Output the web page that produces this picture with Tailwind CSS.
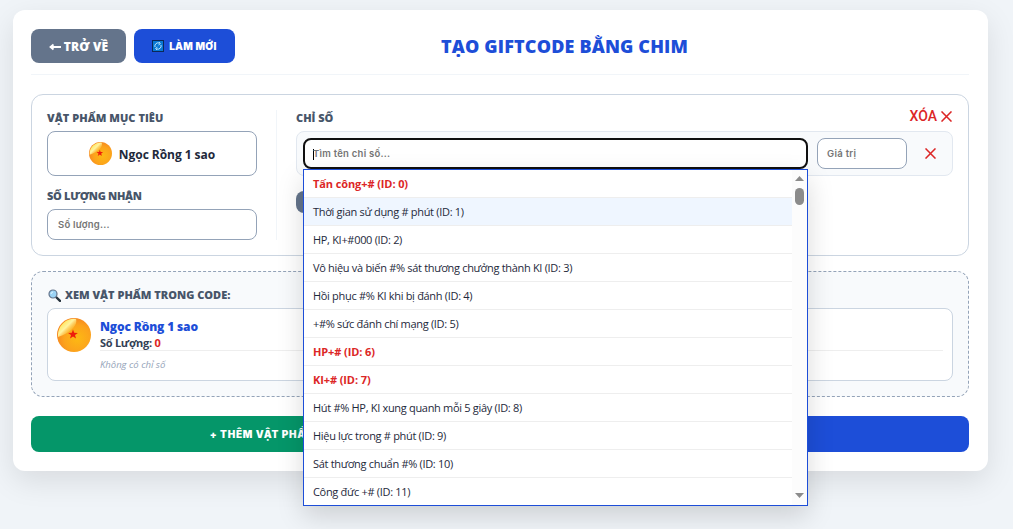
<!DOCTYPE html>
<html lang="vi">
  <head>
    <meta charset="UTF-8" />
    <meta name="viewport" content="width=device-width, initial-scale=1.0" />
    <title>Tạo Giftcode</title>
    <script src="https://cdn.jsdelivr.net/npm/@tailwindcss/browser@4"></script>
  </head>
  <body class="h-screen overflow-hidden bg-[#f0f4f8] pl-[13px] pt-[10px] font-['Open_Sans','Noto_Sans',sans-serif] text-[#1e293b]">
    <svg class="absolute size-0">
      <defs>
        <radialGradient id="ball" cx="0.6" cy="0.6" r="0.65">
          <stop offset="0" stop-color="#fdb913" />
          <stop offset="0.6" stop-color="#fca31c" />
          <stop offset="1" stop-color="#f58220" />
        </radialGradient>
        <linearGradient id="shine" x1="0.1" y1="0.1" x2="0.8" y2="0.8">
          <stop offset="0" stop-color="#ffe23a" />
          <stop offset="0.5" stop-color="#fff3a0" />
          <stop offset="1" stop-color="#fdc02c" stop-opacity="0" />
        </linearGradient>
        <symbol id="dragon-ball" viewBox="0 0 34 34">
          <circle cx="17" cy="17" r="17" fill="url(#ball)" />
          <path d="M1 17A16 16 0 0 1 19 1C21 7 14 15 1 19Z" fill="url(#shine)" />
          <path d="M16 11.5l1.2 3.3 3.7.1-2.9 2.2 1 3.5-3-2-3 2 1-3.5-2.9-2.2 3.7-.1z" fill="#ee1c0c" />
        </symbol>
        <symbol id="cross" viewBox="0 0 12 12">
          <path d="M.5 .5L11.5 11.5M11.5 .5L.5 11.5" fill="none" stroke="#dc2626" stroke-width="1.7" />
        </symbol>
      </defs>
    </svg>

    <main class="h-[461px] w-[975px] rounded-xl bg-white pr-[19px] pl-[18px] pt-[19px] shadow-[0_10px_30px_rgba(0,0,0,0.1)]">
      <header class="flex h-[46px] items-start border-b border-[#f1f5f9]">
        <button class="flex h-[34px] w-[95px] items-center justify-center gap-[3px] rounded-lg bg-[#64748b] pt-px text-[12px] font-extrabold text-white">
          <svg class="h-[8px] w-[12px]" viewBox="0 0 12 8" fill="none" stroke="white" stroke-width="1.8"><path d="M12 4H2M4.5 1.5L1.5 4L4.5 6.5" /></svg>
          <span class="tracking-[0.2px]">TRỞ VỀ</span>
        </button>
        <button class="ml-2 flex h-[34px] w-[101px] items-center justify-center gap-[5px] rounded-lg bg-[#1d4ed8] font-['Inter'] text-[10px] font-black text-white">
          <svg class="size-[12px]" viewBox="0 0 12 12" fill="none">
            <rect x=".5" y=".5" width="11" height="11" fill="#0878d4" stroke="#0b2858" />
            <path d="M3 7A3.2 3.2 0 0 1 7.5 3.2M9 5A3.2 3.2 0 0 1 4.5 8.8M7 2l1.3 1.6L6.5 5M5 10L3.6 8.4 5.4 7.2" stroke="#bfe6ff" />
          </svg>
          <span class="tracking-[0.3px]">LÀM MỚI</span>
        </button>
        <h1 class="ml-[206px] mt-[4px] whitespace-nowrap text-[18px] leading-[26px] font-extrabold tracking-[0.15px] text-[#1d4ed8]">TẠO GIFTCODE BẰNG CHIM</h1>
      </header>

      <!-- Vật phẩm + chỉ số -->
      <section class="mt-[19px] flex h-[162px] rounded-xl border border-[#cbd5e1] p-[15px]">
        <div class="w-[230px] border-r border-[#f1f5f9] pr-[19px]">
          <h2 class="h-[21px] text-[11px] leading-[16px] font-extrabold tracking-[0.05px] text-[#475569]">VẬT PHẨM MỤC TIÊU</h2>
          <div class="flex h-[45px] items-center justify-center gap-[7px] rounded-lg border border-[#94a3b8]">
            <svg class="size-[23px]"><use href="#dragon-ball" /></svg>
            <span class="pt-[3px] text-[12px] font-bold tracking-[-0.05px]">Ngọc Rồng 1 sao</span>
          </div>
          <h2 class="mt-[12px] h-[21px] text-[11px] leading-[16px] font-extrabold tracking-[-0.3px] text-[#475569]">SỐ LƯỢNG NHẬN</h2>
          <div class="flex h-[31px] items-center rounded-lg border border-[#94a3b8] px-[10px] pt-[2px] font-['Inter'] text-[9.5px] font-semibold tracking-[0.25px] text-[#757575]">Số lượng...</div>
        </div>

        <div class="ml-[19px] grow">
          <div class="flex h-[21px] justify-between">
            <h2 class="text-[11px] leading-[16px] font-extrabold text-[#475569]">CHỈ SỐ</h2>
            <button class="flex h-[13px] items-center gap-[4px] font-['Roboto'] text-[14px] font-medium text-[#dc2626]">
              XÓA <svg class="mr-px size-[11px]"><use href="#cross" /></svg>
            </button>
          </div>
          <div class="flex h-[45px] rounded-lg border border-[#e2e8f0] bg-[#f8fafc] p-[6px]">
            <div class="relative h-[31px] w-[505px]">
              <div class="flex h-full items-center rounded-lg border-2 border-[#101010] bg-white px-[8px] pt-[2px] font-['Inter'] text-[9.5px] font-semibold tracking-[0.25px] text-[#757575]">
                <span class="-mr-px h-[11px] w-px bg-black"></span>Tìm tên chỉ số...
              </div>
              <div class="absolute top-[31px] left-0 z-10 flex h-[337px] w-[505px] overflow-hidden border border-[#1d4ed8] bg-white shadow-[0_10px_25px_rgba(0,0,0,0.15)]">
                <div id="options" class="grow text-[11px] text-[#1e293b]"></div>
                <div class="flex w-[15px] flex-col items-center justify-between bg-[#fcfcfc] pt-[6px] pb-[7px]">
                  <div class="flex flex-col items-center gap-[7px]">
                    <svg class="h-[5px] w-[9px]" viewBox="0 0 9 5"><path d="M4.5 0L9 5H0z" fill="#8b8b8b" /></svg>
                    <span class="h-[17px] w-[9px] rounded-full bg-[#8b8b8b]"></span>
                  </div>
                  <svg class="h-[5px] w-[9px]" viewBox="0 0 9 5"><path d="M4.5 5L9 0H0z" fill="#8b8b8b" /></svg>
                </div>
              </div>
            </div>
            <div class="ml-[9px] flex h-[31px] w-[90px] items-center rounded-lg border border-[#94a3b8] bg-white px-[9px] pt-[2px] font-['Inter'] text-[9.5px] font-semibold tracking-[0.3px] text-[#757575]">Giá trị</div>
            <svg class="mt-[10px] ml-[18px] size-[11px]"><use href="#cross" /></svg>
          </div>
          <button class="mt-[15px] block h-[22px] w-[120px] rounded-lg bg-[#64748b]"></button>
        </div>
      </section>

      <!-- Xem trước -->
      <section class="mt-[15px] h-[126px] rounded-xl border border-dashed border-[#94a3b8] bg-[#f8fafc] px-[15px] pt-[15px]">
        <h2 class="flex h-[21px] items-start gap-[4px] text-[11px] leading-[16px] font-extrabold text-[#475569]">
          <svg class="mt-[2px] ml-px size-[13px]" viewBox="0 0 13 13">
            <path d="M7.5 7.5L12 11.8" stroke="#26323c" stroke-width="2.4" stroke-linecap="round" />
            <circle cx="5" cy="5" r="4" fill="#9bd3f5" stroke="#64748b" stroke-width="1.2" />
            <path d="M3 5A2.3 2.3 0 0 1 5 3" stroke="#e4f6ff" fill="none" />
          </svg>
          <span>XEM VẬT PHẨM TRONG CODE:</span>
        </h2>
        <div class="flex h-[73px] gap-[9px] rounded-lg border border-[#cbd5e1] bg-white px-[9px] pt-[9px]">
          <svg class="size-[34px] shrink-0"><use href="#dragon-ball" /></svg>
          <div class="grow">
            <p class="h-[17px] text-[12px] leading-[18px] font-extrabold tracking-[-0.15px] text-[#1d4ed8]">Ngọc Rồng 1 sao</p>
            <p class="h-[16px] border-b border-[#eeeeee] text-[11px] leading-[16px] font-bold tracking-[-0.28px] text-[#334155]">Số Lượng: <span class="text-[#dc2626]">0</span></p>
            <p class="mt-[6px] text-[9.5px] leading-[16px] text-[#94a3b8] italic">Không có chỉ số</p>
          </div>
        </div>
      </section>

      <div class="mt-[19px] flex h-[36px] gap-[10px] font-['Inter'] text-[10px] font-black text-white">
        <button class="flex-1 rounded-lg bg-[#059669] pt-px tracking-[0.75px]">+ THÊM VẬT PHẨM</button>
        <button class="flex-1 rounded-lg bg-[#1d4ed8]"></button>
      </div>
    </main>

    <script>
      const options = [
        "Tấn công+#",
        "Thời gian sử dụng # phút",
        "HP, KI+#000",
        "Vô hiệu và biến #% sát thương chưởng thành KI",
        "Hồi phục #% KI khi bị đánh",
        "+#% sức đánh chí mạng",
        "HP+#",
        "KI+#",
        "Hút #% HP, KI xung quanh mỗi 5 giây",
        "Hiệu lực trong # phút",
        "Sát thương chuẩn #%",
        "Công đức +#",
      ];
      const important = [0, 6, 7];

      document.getElementById("options").innerHTML = options
        .map((name, id) => {
          const color = important.includes(id)
            ? "font-bold tracking-[-0.1px] text-[#dc2626]"
            : "tracking-[-0.31px]";
          const active = id === 1 ? "bg-[#eff6ff]" : "";
          return `<div class="flex h-[28px] items-center border-b border-[#eeeeee] px-[9px] pt-[2px] ${color} ${active}"><span>${name} (ID: ${id})</span></div>`;
        })
        .join("");
    </script>
  </body>
</html>
